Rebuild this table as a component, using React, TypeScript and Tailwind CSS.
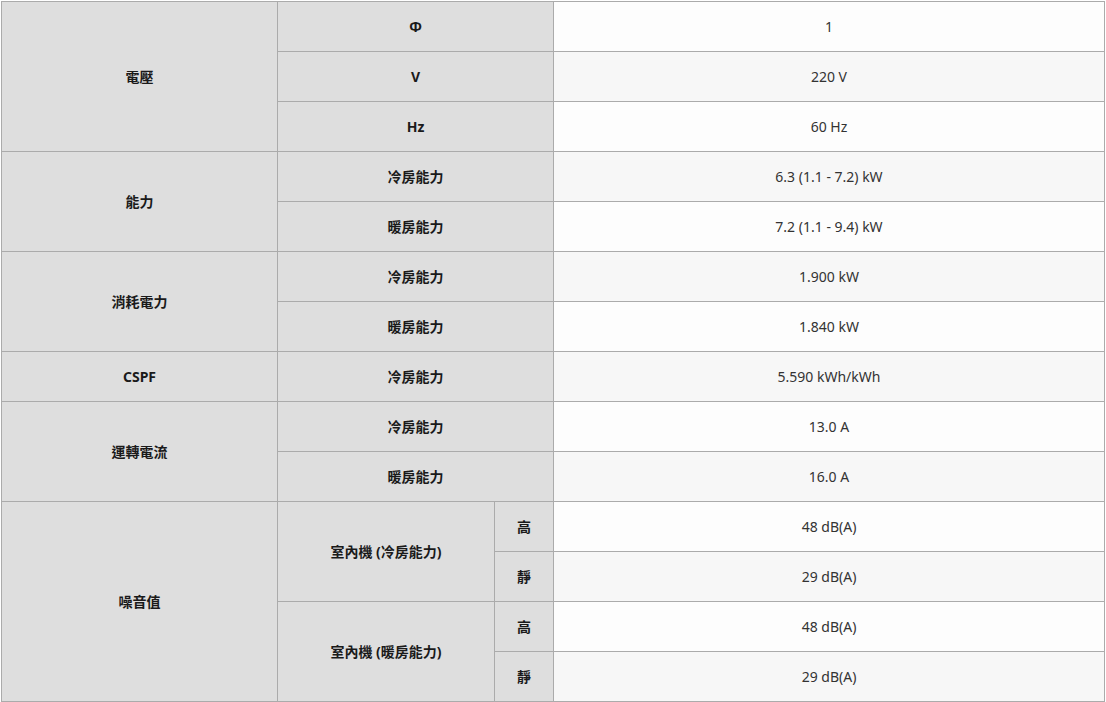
import React from "react";

type Row = { value: string };

const values: string[] = [
  "1",
  "220 V",
  "60 Hz",
  "6.3 (1.1 - 7.2) kW",
  "7.2 (1.1 - 9.4) kW",
  "1.900 kW",
  "1.840 kW",
  "5.590 kWh/kWh",
  "13.0 A",
  "16.0 A",
  "48 dB(A)",
  "29 dB(A)",
  "48 dB(A)",
  "29 dB(A)",
];

const head = "flex items-center justify-center bg-[#dedede] font-bold text-[#1a1a1a]";

export default function App() {
  return (
    <div
      className="ml-px mt-px grid w-fit grid-cols-[275px_216px_58px_550px] grid-rows-[repeat(14,49px)] gap-px bg-[#ababab] p-px text-[14px]"
      style={{ fontFamily: '"Noto Sans", "Noto Sans CJK TC", sans-serif' }}
    >
      {/* first column */}
      <div className={`${head} col-start-1 row-start-1 row-span-3`}>電壓</div>
      <div className={`${head} col-start-1 row-start-4 row-span-2`}>能力</div>
      <div className={`${head} col-start-1 row-start-6 row-span-2`}>消耗電力</div>
      <div className={`${head} col-start-1 row-start-8`}>CSPF</div>
      <div className={`${head} col-start-1 row-start-9 row-span-2`}>運轉電流</div>
      <div className={`${head} col-start-1 row-start-11 row-span-4`}>噪音值</div>

      {/* second column */}
      <div className={`${head} col-start-2 col-span-2 row-start-1`}>Φ</div>
      <div className={`${head} col-start-2 col-span-2 row-start-2`}>V</div>
      <div className={`${head} col-start-2 col-span-2 row-start-3`}>Hz</div>
      <div className={`${head} col-start-2 col-span-2 row-start-4`}>冷房能力</div>
      <div className={`${head} col-start-2 col-span-2 row-start-5`}>暖房能力</div>
      <div className={`${head} col-start-2 col-span-2 row-start-6`}>冷房能力</div>
      <div className={`${head} col-start-2 col-span-2 row-start-7`}>暖房能力</div>
      <div className={`${head} col-start-2 col-span-2 row-start-8`}>冷房能力</div>
      <div className={`${head} col-start-2 col-span-2 row-start-9`}>冷房能力</div>
      <div className={`${head} col-start-2 col-span-2 row-start-10`}>暖房能力</div>
      <div className={`${head} col-start-2 row-start-11 row-span-2`}>室內機 (冷房能力)</div>
      <div className={`${head} col-start-2 row-start-13 row-span-2`}>室內機 (暖房能力)</div>

      {/* third column */}
      <div className={`${head} col-start-3 row-start-11`}>高</div>
      <div className={`${head} col-start-3 row-start-12`}>靜</div>
      <div className={`${head} col-start-3 row-start-13`}>高</div>
      <div className={`${head} col-start-3 row-start-14`}>靜</div>

      {/* values */}
      {values.map((v, i) => (
        <div
          key={i}
          className={`col-start-4 flex items-center justify-center text-[#333] ${
            i % 2 === 1 ? "bg-[#f7f7f7]" : "bg-[#fdfdfd]"
          }`}
          style={{ gridRowStart: i + 1 }}
        >
          {v}
        </div>
      ))}
    </div>
  );
}
